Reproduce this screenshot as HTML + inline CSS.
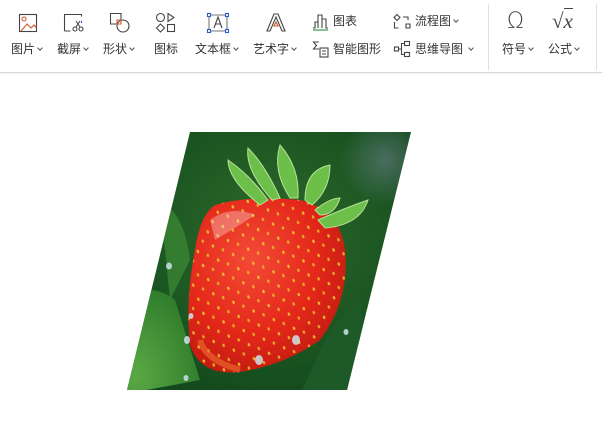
<!DOCTYPE html><html><head><meta charset="utf-8"><style>
body{margin:0;width:602px;height:447px;background:#fff;overflow:hidden;font-family:"Liberation Sans","Noto Sans CJK SC",sans-serif;color:#333;font-size:12px;position:relative}
.tb{position:absolute;left:0;top:0;width:602px;height:72px;background:#fff;border-bottom:1px solid #d8d8d8;box-shadow:0 1px 2px rgba(0,0,0,.06)}
.t{position:absolute;top:41px;white-space:nowrap;line-height:16px}
.c::after{content:"";display:inline-block;width:3px;height:3px;border-right:1px solid #555;border-bottom:1px solid #555;transform:rotate(45deg);margin-left:3px;vertical-align:3px}
svg.i{position:absolute}
.sep{position:absolute;top:4px;width:1px;height:66px;background:#e0e0e0}
</style></head><body>
<div class="tb">
<svg class="i" style="left:18px;top:13px" width="20" height="20" viewBox="0 0 20 20" fill="none" stroke="#444" stroke-width="1.1"><rect x="1.5" y="1.5" width="17" height="17"/><circle cx="6" cy="6" r="2" stroke="#d0572a"/><path d="M3 18l6-7 4 4 3-3 2.5 3" stroke="#d0572a"/></svg>
<div class="t c" style="left:11px">图片</div>
<svg class="i" style="left:63px;top:13px" width="22" height="20" viewBox="0 0 22 20" fill="none" stroke="#444" stroke-width="1.1"><path d="M1.5 18V1.5h17v2M1.5 18h6"/><path d="M18.5 8v2" stroke="#2a5bd0"/><circle cx="12" cy="16" r="2"/><circle cx="18" cy="16" r="2"/><path d="M13 14l4-6M17 14l-4-6"/></svg>
<div class="t c" style="left:57px">截屏</div>
<svg class="i" style="left:109px;top:12px" width="22" height="22" viewBox="0 0 22 22" fill="none" stroke="#444" stroke-width="1.1"><path d="M12 8V1.5H1.5V12H8"/><circle cx="14" cy="14" r="6"/><path d="M8 8h4v4H8z" stroke="#d0572a"/></svg>
<div class="t c" style="left:103px">形状</div>
<svg class="i" style="left:155px;top:12px" width="22" height="22" viewBox="0 0 22 22" fill="none" stroke="#444" stroke-width="1.1"><circle cx="5.5" cy="5.5" r="4"/><path d="M13 1.5v8l6-4z"/><path d="M5.5 12l4 4-4 4-4-4z"/><rect x="12.5" y="12.5" width="7" height="7"/></svg>
<div class="t" style="left:154px">图标</div>
<svg class="i" style="left:206px;top:12px" width="24" height="22" viewBox="0 0 24 22" fill="none" stroke="#444" stroke-width="1.1"><path d="M3 3v16M21 3v16M3 3h18M3 19h18" stroke="#777"/><path d="M8 16l4-11 4 11M9.5 12h5"/><g fill="#fff" stroke="#2a5bd0"><rect x="1.5" y="1.5" width="3" height="3"/><rect x="19.5" y="1.5" width="3" height="3"/><rect x="1.5" y="17.5" width="3" height="3"/><rect x="19.5" y="17.5" width="3" height="3"/></g></svg>
<div class="t c" style="left:195px">文本框</div>
<svg class="i" style="left:265px;top:12px" width="22" height="22" viewBox="0 0 22 22" fill="none" stroke="#444" stroke-width="1.1"><path d="M2 19L9 2h4l7 17h-3L11 5 5 19z"/><path d="M9 14l2-4 2 4z" stroke="#d0572a"/></svg>
<div class="t c" style="left:253px">艺术字</div>
<svg class="i" style="left:312px;top:13px" width="18" height="18" viewBox="0 0 18 18" fill="none" stroke="#444" stroke-width="1.1"><path d="M1 15h2V9h3v6M6 15V2h4v13M10 15V6h4v9h2"/><path d="M1 17h15" stroke="#2a8a4a"/></svg>
<div class="t" style="left:333px;top:13px">图表</div>
<svg class="i" style="left:312px;top:40px" width="18" height="18" viewBox="0 0 18 18" fill="none" stroke="#444" stroke-width="1.1"><path d="M7 2H1.5l3 3.5-3 3.5H7"/><rect x="8" y="8" width="8" height="9"/><path d="M10 11h4M10 14h4"/></svg>
<div class="t" style="left:333px">智能图形</div>
<svg class="i" style="left:393px;top:13px" width="18" height="18" viewBox="0 0 18 18" fill="none" stroke="#444" stroke-width="1.1"><path d="M4 1.5l3 3-3 3-3-3z"/><path d="M1.5 9v6h4M10 4h5v3M13 11h4v4h-4z"/></svg>
<div class="t c" style="left:415px;top:13px">流程图</div>
<svg class="i" style="left:393px;top:40px" width="18" height="18" viewBox="0 0 18 18" fill="none" stroke="#444" stroke-width="1.1"><rect x="1.5" y="7" width="4" height="4"/><rect x="11.5" y="1.5" width="5" height="4"/><rect x="11.5" y="12.5" width="5" height="4"/><path d="M5.5 9h3V3.5h3M8.5 9v5.5h3"/></svg>
<div class="t c" style="left:415px">思维导图 </div>
<div class="sep" style="left:488px"></div>
<div style="position:absolute;left:507px;top:9px;font-size:22px;font-family:'DejaVu Sans',sans-serif;color:#444;font-weight:300">Ω</div>
<div class="t c" style="left:502px">符号</div>
<div style="position:absolute;left:552px;top:9px;font-size:21px;font-family:'Liberation Serif',serif;font-style:italic;color:#444">√<span style="border-top:1px solid #444">x</span></div>
<div class="t c" style="left:548px">公式</div>
<div class="sep" style="left:596px"></div>
</div>
<svg style="position:absolute;left:0;top:0" width="602" height="447">
<defs>
<clipPath id="p"><path d="M190 132H411L347 390H127Z"/></clipPath>
<radialGradient id="bg" cx="0.5" cy="0.4" r="0.8"><stop offset="0" stop-color="#2e6b2a"/><stop offset="0.6" stop-color="#185220"/><stop offset="1" stop-color="#0f401a"/></radialGradient>
<radialGradient id="sb" cx="0.4" cy="0.35" r="0.7"><stop offset="0" stop-color="#f44a36"/><stop offset="0.6" stop-color="#e4281a"/><stop offset="1" stop-color="#c01a10"/></radialGradient>
<radialGradient id="lf" cx="0.2" cy="0.8" r="0.9"><stop offset="0" stop-color="#5aa844"/><stop offset="1" stop-color="#2d7a2a"/></radialGradient>
<radialGradient id="blur" r="0.5"><stop offset="0" stop-color="#6a7f88" stop-opacity="0.6"/><stop offset="1" stop-color="#6a7f88" stop-opacity="0"/></radialGradient>
<pattern id="seeds" width="16" height="15" patternUnits="userSpaceOnUse" patternTransform="rotate(-20)"><ellipse cx="4" cy="4" rx="1.2" ry="1.8" fill="#f0c830"/><ellipse cx="12" cy="11" rx="1.2" ry="1.8" fill="#e8b828"/></pattern>
</defs>
<g clip-path="url(#p)">
<rect x="120" y="130" width="300" height="265" fill="url(#bg)"/>
<circle cx="385" cy="160" r="45" fill="url(#blur)"/>
<path d="M120 300 Q150 280 175 300 L200 380 L120 395Z" fill="url(#lf)"/>
<path d="M160 200 Q185 215 190 260 L170 300 Z" fill="#3d8a35" opacity="0.7"/>
<path d="M330 330 L360 300 L370 390 L300 395Z" fill="#1e5a28"/>
<path d="M215 205 Q250 195 300 200 Q340 210 345 250 Q350 300 320 340 Q285 365 240 372 Q200 376 190 345 Q185 300 195 250 Q200 215 215 205Z" fill="url(#sb)"/>
<path d="M215 205 Q250 195 300 200 Q340 210 345 250 Q350 300 320 340 Q285 365 240 372 Q200 376 190 345 Q185 300 195 250 Q200 215 215 205Z" fill="url(#seeds)" opacity="0.9"/>
<path d="M210 220 Q230 205 255 215 Q240 225 215 240Z" fill="#fff" opacity="0.3"/>
<path d="M200 340 Q205 360 240 370" stroke="#f07030" stroke-width="6" fill="none" opacity="0.6"/>
<g fill="#6cc04a" stroke="#b8e098" stroke-width="1">
<path d="M260 205 Q228 180 228 160 Q250 175 268 200Z"/>
<path d="M272 200 Q245 170 248 148 Q265 165 280 198Z"/>
<path d="M290 198 Q272 170 280 145 Q300 168 298 198Z"/>
<path d="M305 200 Q305 170 330 165 Q330 190 312 205Z"/>
<path d="M315 210 Q330 198 340 198 Q335 215 320 215Z"/>
<path d="M318 220 Q345 208 368 200 Q360 225 325 228Z"/>
</g>
<g fill="#cfe2ea" opacity="0.85"><ellipse cx="169" cy="266" rx="3" ry="3.5"/><ellipse cx="187" cy="340" rx="3" ry="4"/><ellipse cx="296" cy="340" rx="4" ry="5"/><ellipse cx="259" cy="360" rx="4" ry="5"/><ellipse cx="346" cy="332" rx="2.5" ry="3"/><ellipse cx="186" cy="378" rx="2.5" ry="3"/><ellipse cx="191" cy="316" rx="2.5" ry="3"/></g>
</g>
</svg>
</body></html>
